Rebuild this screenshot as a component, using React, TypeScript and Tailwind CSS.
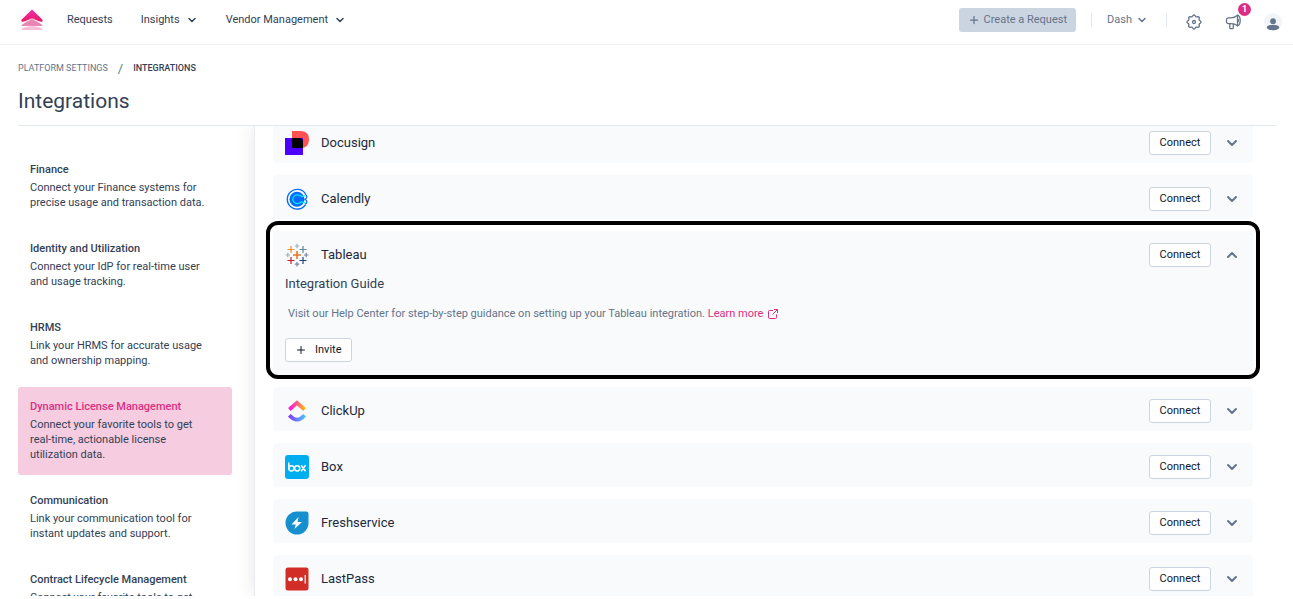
import { ChevronDown, ChevronUp, Plus } from "lucide-react";
import type { ReactNode } from "react";

const categories = [
  {
    name: "Finance",
    text: "Connect your Finance systems for precise usage and transaction data.",
  },
  {
    name: "Identity and Utilization",
    text: "Connect your IdP for real-time user and usage tracking.",
  },
  {
    name: "HRMS",
    text: "Link your HRMS for accurate usage and ownership mapping.",
  },
  {
    name: "Dynamic License Management",
    text: "Connect your favorite tools to get real-time, actionable license utilization data.",
    active: true,
  },
  {
    name: "Communication",
    text: "Link your communication tool for instant updates and support.",
  },
  {
    name: "Contract Lifecycle Management",
    text: "Connect your favorite tools to get contract data in one place.",
  },
];

function Logo() {
  return (
    <svg viewBox="0 0 22 22" className="size-[22px]" aria-hidden="true">
      <defs>
        <linearGradient id="brand" x1="0" y1="0" x2="0" y2="1">
          <stop offset="0" stopColor="#ee2fb0" />
          <stop offset="1" stopColor="#ec1763" />
        </linearGradient>
      </defs>
      <path d="M0.500 21q0-2 3.500-2.800 7-2 14 0 3.500.8 3.500 2.800z" fill="#f6bdd6" />
      <path d="M0.500 17q0-1.600 3-3L11 9.800l7.500 4.200q3 1.400 3 3z" fill="#ea86b4" />
      <path d="M11 0.500 21.300 10.600q1 2.200-.6 2.200-1.700 0-3.400-.8L11 9.200 4.700 12q-1.700.8-3.400.8-1.600 0-.6-2.200z" fill="url(#brand)" />
    </svg>
  );
}

// Outline of an eight-lobed cog, traced as a wave around a circle
const gearPoints = Array.from({ length: 96 }, (_, i) => {
  const angle = (i / 96) * Math.PI * 2;
  const radius = 6.3 + 0.75 * Math.cos(angle * 8);
  return `${(8 + radius * Math.cos(angle)).toFixed(2)},${(8 + radius * Math.sin(angle)).toFixed(2)}`;
}).join(" ");

function Gear() {
  return (
    <svg viewBox="0 0 16 16" className="size-4" fill="none" stroke="currentColor" strokeWidth="1.300" aria-hidden="true">
      <polygon points={gearPoints} strokeLinejoin="round" />
      <circle cx="8" cy="8" r="1.500" />
    </svg>
  );
}

function Megaphone() {
  return (
    <svg viewBox="0 0 18 18" className="size-[18px]" fill="none" stroke="currentColor" strokeWidth="1.300" strokeLinecap="round" strokeLinejoin="round" aria-hidden="true">
      <path d="M12.500 2.200v10.600c-1.800-1.400-4-2.100-6.500-2.100H3.500a2 2 0 0 1-2-2V6.800a2 2 0 0 1 2-2H6c2.500 0 4.700-.9 6.500-2.600z" />
      <path d="M12.500 2.200c1.700.5 2.700 2.600 2.700 5.300s-1 4.800-2.700 5.300M12.700 6.200c1 .5 1 2.200 0 2.700" />
      <path d="M4.800 10.800v4q0 .9.900.9h1.700q.9 0 .9-.9v-3.800" />
    </svg>
  );
}

function Avatar() {
  return (
    <svg viewBox="0 0 18 18" className="size-[18px]" aria-hidden="true">
      <circle cx="9" cy="9" r="9" fill="#f1f5f9" />
      <circle cx="9" cy="8.200" r="2.900" fill="#64748b" />
      <ellipse cx="9" cy="14.500" rx="6.200" ry="2.700" fill="#64748b" />
    </svg>
  );
}

function DocusignIcon() {
  return (
    <svg viewBox="0 0 24 24" className="size-6" aria-hidden="true">
      <path d="M7 0h8.500Q24 0 24 8.500 24 17 15.500 17H7z" fill="#ff5252" />
      <path d="M0 7h18v17H0z" fill="#4c00ff" />
      <path d="M7 7h8q3 1 3 4v6H7z" fill="#000" />
    </svg>
  );
}

function CalendlyIcon() {
  return (
    <svg viewBox="0 0 24 24" className="size-6" fill="none" aria-hidden="true">
      <path d="M20.500 6.800A9.900 9.900 0 1 0 20.500 17.600" stroke="#006bff" strokeWidth="1.300" />
      <path d="M20 7.200q2 .8 1.800 2.600-.4 1.500-1.600 2.400 1.300 1 1.600 2.400.2 1.800-1.800 2.600" stroke="#006bff" strokeWidth="1.200" />
      <circle cx="12" cy="12.200" r="7.500" fill="#006bff" />
      <path d="M16.500 9.300q-2-1.500-4.300-1.500a4.400 4.400 0 0 0 0 8.800q2.300 0 4.300-1.500" stroke="#0ae8f0" strokeWidth="1.300" />
      <path d="M15.800 9.500q2 .4 4-1M15.800 14.900q2-.4 4 1" stroke="#0ae8f0" strokeWidth="1.200" />
    </svg>
  );
}

function TableauIcon() {
  return (
    <svg viewBox="0 0 24 24" className="size-6" strokeWidth="1.200" aria-hidden="true">
      <path d="M12 8v8M8 12h8" stroke="#e8762c" strokeWidth="1.600" />
      <path d="M6 3v7M2.500 6.500h7" stroke="#eb912c" />
      <path d="M18 3v7M14.500 6.500h7" stroke="#59879b" />
      <path d="M6 14v7M2.500 17.500h7" stroke="#c72035" />
      <path d="M18 14v7M14.500 17.500h7" stroke="#1f457e" />
      <path d="M12 .8v4.400M9.800 3h4.400" stroke="#98b5bd" />
      <path d="M12 19v4.400M9.800 21.200h4.400M21.200 9.800v4.400M19 12h4.400" stroke="#7b83aa" />
      <path d="M2.800 9.800v4.400M.6 12H5" stroke="#98b5bd" />
    </svg>
  );
}

function ClickUpIcon() {
  return (
    <svg viewBox="0 0 24 24" className="size-6" fill="none" strokeWidth="3.800" aria-hidden="true">
      <defs>
        <linearGradient id="cu-top" x1="3" y1="0" x2="21" y2="0" gradientUnits="userSpaceOnUse">
          <stop offset="0" stopColor="#ff02f0" />
          <stop offset="0.500" stopColor="#ff5c82" />
          <stop offset="1" stopColor="#ffc800" />
        </linearGradient>
        <linearGradient id="cu-bottom" x1="3" y1="0" x2="21" y2="0" gradientUnits="userSpaceOnUse">
          <stop offset="0" stopColor="#8930fd" />
          <stop offset="1" stopColor="#49ccf9" />
        </linearGradient>
      </defs>
      <path d="M4.400 10.500 12 3.800l7.600 6.700" stroke="url(#cu-top)" />
      <path d="M4.400 16.300q7.600 8.700 15.200 0" stroke="url(#cu-bottom)" />
    </svg>
  );
}

function BoxIcon() {
  return (
    <svg viewBox="0 0 24 24" className="size-6" fill="none" stroke="#fff" strokeWidth="1.500" strokeLinecap="round" aria-hidden="true">
      <rect width="24" height="24" rx="3" fill="#00aeef" stroke="none" />
      <path d="M3.800 8v5.500" />
      <circle cx="6.400" cy="13.300" r="2.600" />
      <circle cx="12.200" cy="13.300" r="2.600" />
      <path d="m16.500 10.800 3.700 5M20.200 10.800l-3.700 5" />
    </svg>
  );
}

function FreshserviceIcon() {
  return (
    <svg viewBox="0 0 24 24" className="size-6" aria-hidden="true">
      <path d="M12 .5h9q2.500 0 2.500 2.500v9A11.500 11.500 0 1 1 12 .5z" fill="#168fce" />
      <path d="m13.500 6-7 7.500h4.300L9.500 18l7.500-7h-4.500z" fill="#fff" />
    </svg>
  );
}

function LastPassIcon() {
  return (
    <svg viewBox="0 0 24 24" className="size-6" aria-hidden="true">
      <rect x="0.500" y="0.500" width="23" height="23" rx="2.500" fill="#d32d27" />
      <g fill="#fff">
        <circle cx="5" cy="12.300" r="2" />
        <circle cx="10.500" cy="12.300" r="2" />
        <circle cx="16" cy="12.300" r="2" />
        <path d="M19.600 8h1.200v8.500h-1.200z" />
      </g>
    </svg>
  );
}

function ExternalLink() {
  return (
    <svg viewBox="0 0 12 12" className="size-3" fill="none" stroke="currentColor" aria-hidden="true">
      <path d="M6 2.500H2.500q-1 0-1 1v6q0 1 1 1h6q1 0 1-1V6.500M7 1.500h3.500V5M10.500 1.500 5.500 6.500" />
    </svg>
  );
}

type IntegrationProps = {
  name: string;
  icon: ReactNode;
  open?: boolean;
  children?: ReactNode;
};

function Integration({ name, icon, open, children }: IntegrationProps) {
  return (
    <li className="relative rounded-sm bg-[#f8fafc]">
      <div className="flex h-11 items-center pt-1 pr-[13px] pl-3">
        {icon}
        <h2 className="ml-3 grow text-[13px] text-[#1e293b]">{name}</h2>
        <button className="h-6 w-[62px] rounded-[3px] border border-[#cbd5e1] bg-white text-[11px] text-[#0f172a]">
          Connect
        </button>
        <button className="ml-[13px] text-[#64748b]" aria-label={open ? `Collapse ${name}` : `Expand ${name}`}>
          {open ? <ChevronUp className="size-4" strokeWidth={3} /> : <ChevronDown className="size-4" strokeWidth={3} />}
        </button>
      </div>
      {children}
      {open && (
        <div className="pointer-events-none absolute -inset-x-[7px] -top-[10px] -bottom-1 rounded-xl border-4 border-black" />
      )}
    </li>
  );
}

function Header() {
  return (
    <header className="flex h-[45px] shrink-0 items-center border-b border-[#f1f5f9] pr-[11px] pl-[21px] text-[11px] text-[#334155]">
      <a href="#" className="pb-1" aria-label="Home">
        <Logo />
      </a>
      <nav className="ml-6 flex grow items-center gap-7 pb-1">
        <a href="#">Requests</a>
        <button className="flex items-center gap-[6px]">
          Insights
          <ChevronDown className="size-3" strokeWidth={3} />
        </button>
        <button className="flex items-center gap-[6px]">
          Vendor Management
          <ChevronDown className="size-3" strokeWidth={3} />
        </button>
      </nav>
      <div className="flex items-center text-[#64748b]">
        <button className="mb-1 flex h-6 items-center gap-1 rounded-[3px] bg-[#cbd5e1] px-[9px]">
          <Plus className="size-3" strokeWidth={2.5} />
          Create a Request
        </button>
        <div className="mb-1 ml-[15px] flex h-[14px] items-center border-x border-[#e2e8f0] pr-[18px] pl-[15px]">
          <button className="flex items-center gap-1">
            Dash
            <ChevronDown className="size-3" strokeWidth={3} />
          </button>
        </div>
        <button className="ml-[19px]" aria-label="Settings">
          <Gear />
        </button>
        <button className="relative ml-[23px]" aria-label="Announcements">
          <Megaphone />
          <span className="absolute -top-[10px] left-[13px] flex size-[13px] items-center justify-center rounded-full bg-[#db2f83] text-[9px] font-bold text-white">
            1
          </span>
        </button>
        <button className="ml-[21px]" aria-label="Account">
          <Avatar />
        </button>
      </div>
    </header>
  );
}

export default function App() {
  return (
    <div className="flex h-screen flex-col overflow-hidden bg-white pb-[3px] font-[Roboto,sans-serif]">
      <Header />
      <main className="mr-[17px] ml-[18px] flex min-h-0 grow flex-col">
        <nav className="mt-4 flex h-4 items-center gap-[10px] text-[9px] text-[#64748b]" aria-label="Breadcrumb">
          <a href="#">PLATFORM SETTINGS</a>
          <span className="text-[13px]">/</span>
          <span className="font-medium text-[#334155]">INTEGRATIONS</span>
        </nav>
        <h1 className="mt-3 mb-3 text-[21px] leading-6 text-[#334155]">Integrations</h1>
        <div className="flex min-h-0 grow overflow-hidden border-t border-[#e2e8f0]">
          <aside className="w-[214px] shrink-0 pt-6">
            <ul className="flex flex-col gap-[6px] text-[11px] leading-[15px] text-[#334155]">
              {categories.map((category) => (
                <li key={category.name}>
                  <a href="#" className={category.active ? "block rounded-[3px] bg-[#f5cce0] px-3 pt-3 pb-[13px]" : "block px-3 pt-3 pb-[13px]"}>
                    <h2 className={category.active ? "mb-[3px] font-medium text-[#db2f83]" : "mb-[3px] font-medium"}>{category.name}</h2>
                    <p className="pr-3">{category.text}</p>
                  </a>
                </li>
              ))}
            </ul>
          </aside>
          <section className="ml-[22px] grow border-l border-[#e9edf2] pr-[23px] pl-[18px] shadow-[0_0_18px_rgba(0,0,0,0.1)]">
            <ul className="-mt-[7px] flex flex-col gap-3">
              <Integration name="Docusign" icon={<DocusignIcon />} />
              <Integration name="Calendly" icon={<CalendlyIcon />} />
              <Integration name="Tableau" icon={<TableauIcon />} open>
                <div className="px-3 pt-px pb-[13px]">
                  <h3 className="text-[13px] leading-4 text-[#334155]">Integration Guide</h3>
                  <p className="mt-[14px] pl-[3px] text-[11px] leading-4 text-[#64748b]">
                    Visit our Help Center for step-by-step guidance on setting up your Tableau integration.{" "}
                    <a href="#" className="inline-flex items-center gap-1 text-[#db2f83]">
                      Learn more
                      <ExternalLink />
                    </a>
                  </p>
                  <button className="mt-4 flex h-6 items-center gap-2 rounded-[3px] border border-[#cbd5e1] bg-white px-[9px] text-[11px] text-[#0f172a]">
                    <Plus className="size-3" />
                    Invite
                  </button>
                </div>
              </Integration>
              <Integration name="ClickUp" icon={<ClickUpIcon />} />
              <Integration name="Box" icon={<BoxIcon />} />
              <Integration name="Freshservice" icon={<FreshserviceIcon />} />
              <Integration name="LastPass" icon={<LastPassIcon />} />
            </ul>
          </section>
        </div>
      </main>
    </div>
  );
}
